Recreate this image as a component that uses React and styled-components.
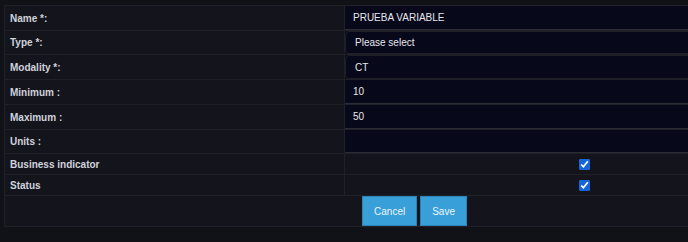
import React from "react";
import styled, { createGlobalStyle } from "styled-components";

const GlobalStyle = createGlobalStyle`
  html, body {
    margin: 0;
    padding: 0;
    background: #111217;
    overflow: hidden;
  }
  body {
    font-family: "Liberation Sans", Arial, sans-serif;
  }
`;

const fields = [
  { label: "Name *:", kind: "input", value: "PRUEBA VARIABLE", h: 24 },
  { label: "Type *:", kind: "select", value: "Please select", h: 23 },
  { label: "Modality *:", kind: "select", value: "CT", h: 24 },
  { label: "Minimum :", kind: "input", value: "10", h: 24 },
  { label: "Maximum :", kind: "input", value: "50", h: 24 },
  { label: "Units :", kind: "input", value: "", h: 23 },
  { label: "Business indicator", kind: "check", h: 21 },
  { label: "Status", kind: "check", h: 21 },
];

const App = () => {
  return (
    <>
      <GlobalStyle />
      <Wrap>
        <Table>
          <tbody>
            {fields.map((f) => (
              <Row key={f.label} h={f.h}>
                <Label>{f.label}</Label>
                <Value center={f.kind === "check"}>
                  {f.kind === "input" && (
                    <TextInput h={f.h} defaultValue={f.value} />
                  )}
                  {f.kind === "select" && (
                    <Select h={f.h} defaultValue={f.value}>
                      <option>{f.value}</option>
                    </Select>
                  )}
                  {f.kind === "check" && <Check type="checkbox" defaultChecked />}
                </Value>
              </Row>
            ))}
            <Row h={30}>
              <ButtonCell colSpan={2}>
                <Buttons>
                  <Button>Cancel</Button>
                  <Button>Save</Button>
                </Buttons>
              </ButtonCell>
            </Row>
          </tbody>
        </Table>
      </Wrap>
    </>
  );
};
export default App;

const Wrap = styled.div`
  padding: 5px 0 0 4px;
  width: 900px;
`;

const Table = styled.table`
  width: 821px;
  border-collapse: collapse;
  background: #14151c;
  border: 1px solid #1f2028;
`;

const Row = styled.tr`
  height: ${(p) => p.h}px;
`;

const Label = styled.td`
  width: 329px;
  height: 0;
  padding: 0 5px;
  border: 1px solid #1f2028;
  color: #d0d2dc;
  font-size: 10px;
  font-weight: bold;
  vertical-align: middle;
`;

const Value = styled.td`
  padding: 0;
  border: 1px solid #1f2028;
  text-align: ${(p) => (p.center ? "center" : "left")};
  vertical-align: middle;
  background: ${(p) => (p.center ? "#14151c" : "#07081a")};
`;

const TextInput = styled.input`
  display: block;
  box-sizing: border-box;
  width: 100%;
  height: ${(p) => p.h}px;
  margin: 0;
  padding: 0 8px;
  background: #07081a;
  border: none;
  border-bottom: 1px solid #2a2b34;
  color: #e6e7ec;
  font-family: "Liberation Sans", Arial, sans-serif;
  font-size: 10px;
  outline: none;
`;

const Select = styled.select`
  display: block;
  box-sizing: border-box;
  width: 100%;
  height: ${(p) => p.h}px;
  margin: 0;
  padding: 0 0 0 9px;
  appearance: none;
  background: #07081a;
  border: 1px solid #1d1e27;
  border-radius: 4px;
  color: #e6e7ec;
  font-family: "Liberation Sans", Arial, sans-serif;
  font-size: 10px;
  outline: none;
`;

const Check = styled.input`
  display: block;
  width: 11px;
  height: 11px;
  margin: 0 auto;
  accent-color: #1565d8;
`;

const ButtonCell = styled.td`
  padding: 0;
  border: 1px solid #1f2028;
  vertical-align: top;
`;

const Buttons = styled.div`
  display: flex;
  justify-content: center;
  gap: 3px;
`;

const Button = styled.button`
  height: 30px;
  padding: 0 11px;
  background: #389fd9;
  border: 1px solid #2a82b8;
  color: #eef6fb;
  font-family: "Liberation Sans", Arial, sans-serif;
  font-size: 10px;
  cursor: pointer;
`;
